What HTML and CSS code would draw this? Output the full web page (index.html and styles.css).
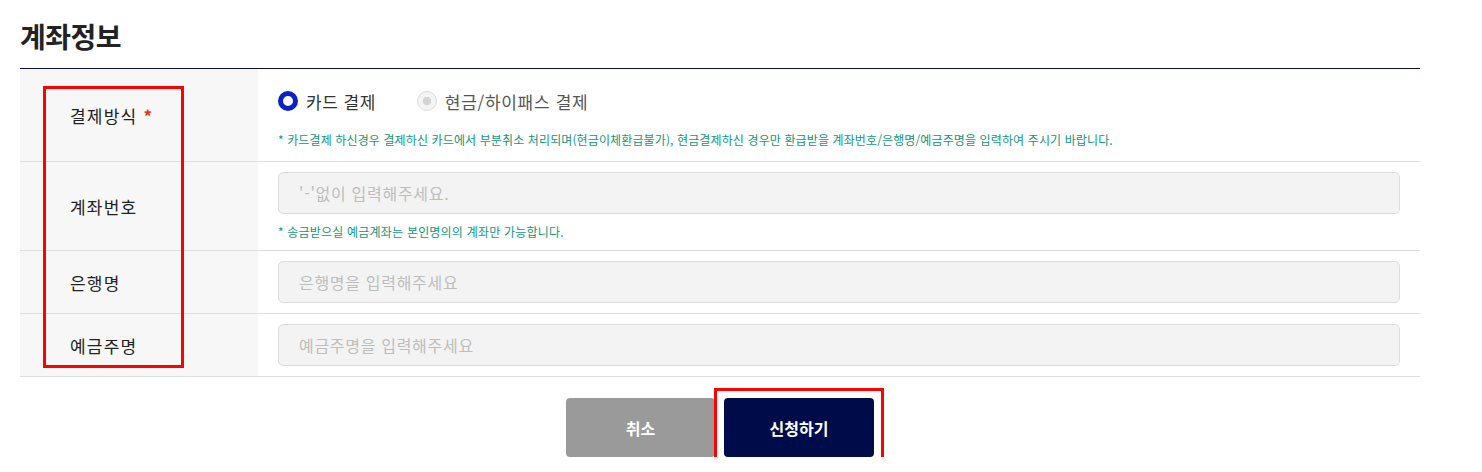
FILE: index.html
```html
<!DOCTYPE html>
<html lang="ko">
<head>
<meta charset="utf-8">
<title>계좌정보</title>
<link rel="stylesheet" href="styles.css">
</head>
<body>
<div class="wrap">
  <h2 class="title">계좌정보</h2>
  <div class="table">
    <div class="row row-pay">
      <div class="th">결제방식 <span class="req">*</span></div>
      <div class="td">
        <div class="radios">
          <label class="radio"><span class="dot on"></span>카드 결제</label>
          <label class="radio disabled"><span class="dot off"></span>현금/하이패스 결제</label>
        </div>
        <p class="note">* 카드결제 하신경우 결제하신 카드에서 부분취소 처리되며(현금이체환급불가), 현금결제하신 경우만 환급받을 계좌번호/은행명/예금주명을 입력하여 주시기 바랍니다.</p>
      </div>
    </div>
    <div class="row row-acct">
      <div class="th">계좌번호</div>
      <div class="td">
        <input class="inp" type="text" placeholder="'-'없이 입력해주세요." disabled>
        <p class="note note2">* 송금받으실 예금계좌는 본인명의의 계좌만 가능합니다.</p>
      </div>
    </div>
    <div class="row">
      <div class="th">은행명</div>
      <div class="td"><input class="inp" type="text" placeholder="은행명을 입력해주세요" disabled></div>
    </div>
    <div class="row">
      <div class="th">예금주명</div>
      <div class="td"><input class="inp" type="text" placeholder="예금주명을 입력해주세요" disabled></div>
    </div>
  </div>
  <div class="btns">
    <button class="btn cancel">취소</button>
    <button class="btn submit">신청하기</button>
  </div>
  <div class="mark mark-labels"></div>
  <div class="mark mark-btn"></div>
</div>
</body>
</html>
```

FILE: styles.css
```css
* { box-sizing: border-box; }
html, body { margin: 0; padding: 0; background: #fff; }
body {
  font-family: "Noto Sans CJK KR", "Noto Sans", sans-serif;
  color: #222;
}
.wrap {
  position: relative;
  width: 1400px;
  margin: 0 0 0 20px;
  padding-top: 16px;
}
.title {
  margin: 0 0 12px;
  font-size: 28px;
  line-height: 40px;
  font-weight: 700;
  color: #222;
  letter-spacing: -0.5px;
}
.table {
  border-top: 1px solid #0a0f4a;
}
.row {
  display: flex;
  border-bottom: 1px solid #dedede;
}
.th {
  width: 238px;
  flex: none;
  background: #f7f7f7;
  padding-left: 50px;
  display: flex;
  align-items: center;
  font-size: 17px;
  color: #222;
  letter-spacing: 1.2px;
}
.req {
  color: #e8341c;
  margin-left: 6px;
  font-weight: 700;
}
.td {
  flex: 1;
  padding: 10px 20px;
}
.row-pay .td { padding: 18px 20px 12px; }
.row-acct .td { padding: 10px 20px 9px; }
.radios {
  display: flex;
  align-items: center;
  height: 28px;
  margin-bottom: 16px;
}
.radio {
  display: flex;
  align-items: center;
  font-size: 17px;
  color: #333;
  margin-right: 41px;
  letter-spacing: 0.5px;
}
.radio.disabled { color: #555; letter-spacing: 0.7px; }
.dot {
  width: 20px;
  height: 20px;
  border-radius: 50%;
  margin-right: 8px;
  flex: none;
}
.dot.on {
  border: 5px solid #0b20c8;
  background: #fff;
}
.dot.off {
  border: 1px solid #dcdcdc;
  background: radial-gradient(circle, #d4d4d4 0 4px, #f4f4f4 4.5px);
}
.note {
  margin: 0;
  font-size: 12px;
  line-height: 18px;
  color: #11967a;
  letter-spacing: 0.12px;
}
.note2 { margin-top: 9px; letter-spacing: 0.2px; }
.inp {
  display: block;
  width: 1122px;
  height: 42px;
  border: 1px solid #dcdcdc;
  border-radius: 5px;
  background: #f3f3f3;
  padding: 0 20px;
  font-family: inherit;
  font-size: 16px;
  letter-spacing: 0.7px;
  color: #333;
}
.inp::placeholder { color: #bdbdbd; }
.btns {
  display: flex;
  justify-content: center;
  gap: 9px;
  margin-top: 21px;
}
.btn {
  width: 149px;
  height: 59px;
  border: 0;
  border-radius: 4px;
  font-family: inherit;
  font-size: 16px;
  font-weight: 700;
  color: #fff;
  cursor: pointer;
}
.btn.cancel { background: #9a9a9a; }
.btn.submit { background: #000c4a; width: 150px; }
.mark {
  position: absolute;
  border: 3px solid #ff0000;
  pointer-events: none;
}
.mark-labels { left: 23px; top: 86px; width: 141px; height: 282px; }
.mark-btn { left: 694px; top: 388px; width: 170px; height: 77px; }
```
